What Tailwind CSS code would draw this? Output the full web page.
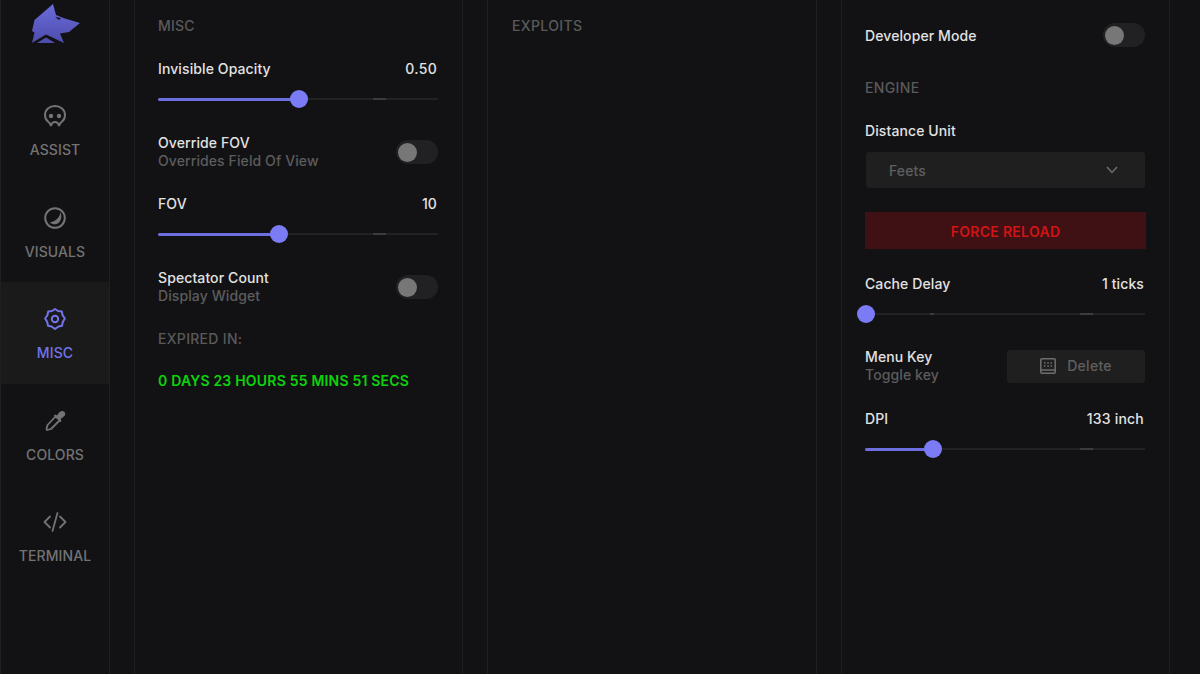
<!DOCTYPE html>
<html lang="en">
<head>
  <meta charset="UTF-8">
  <title>Menu</title>
  <script src="https://cdn.jsdelivr.net/npm/@tailwindcss/browser@4"></script>
</head>
<body class="bg-[#121215] font-['Inter',sans-serif] overflow-hidden">
  <div class="flex h-[674px] w-[1200px] overflow-hidden text-[14px] leading-[18px] font-medium tracking-[0.1px]">

    <!-- Sidebar -->
    <aside class="w-[110px] shrink-0 border-x border-[#1c211d] text-[#737373]">
      <div class="h-[79px] flex justify-center">
        <svg class="w-[50px] h-[40px] mt-[4px] ml-[1px]" viewBox="30 4 50 40">
          <defs>
            <linearGradient id="wolf" x1="0" y1="0" x2="0" y2="1">
              <stop offset="0" stop-color="#6c6cdc"/>
              <stop offset="1" stop-color="#4c4cac"/>
            </linearGradient>
          </defs>
          <path fill="url(#wolf)" d="M52 4 L55 15 L63 18.300 L79 23 L68 32 L59 33.500 L63 43 L31 43 L33.500 32.500 L31 31 L33.500 20 Z"/>
          <path fill="#121215" d="M54 17 L60 18 L58 20 Z"/>
          <path fill="#121215" d="M30 43.500 L45 34.500 L64 43.500 L55 43.500 L45 37.500 L35 43.500 Z"/>
        </svg>
      </div>

      <a class="h-[101.5px] flex flex-col items-center">
        <svg class="mt-[25px] w-[24px] h-[24px]" viewBox="0 0 24 24" fill="none" stroke="#737373" stroke-width="2">
          <path d="M8 22 C7.500 20 7 19 5 17.500 C3 16 2 14 2 11 C2 5.500 6.500 2 12 2 C17.500 2 22 5.500 22 11 C22 14 21 16 19 17.500 C17 19 16.500 20 16 22 C15.500 19.500 14.500 18 12 18 C9.500 18 8.500 19.500 8 22 Z"/>
          <circle cx="8" cy="12" r="2.200" fill="#737373" stroke="none"/>
          <circle cx="16" cy="12" r="2.200" fill="#737373" stroke="none"/>
        </svg>
        <span class="mt-[13px]">ASSIST</span>
      </a>

      <a class="h-[101.5px] flex flex-col items-center">
        <svg class="mt-[25px] w-[24px] h-[24px]" viewBox="0 0 24 24" fill="none" stroke="#737373" stroke-width="2">
          <circle cx="12" cy="12" r="9.800"/>
          <path fill="#737373" stroke="none" d="M17.500 6 C17 11 13.500 15 7 16.500 C9 18.500 13 19 15.500 17 C18.500 14.500 19 10 17.500 6 Z"/>
        </svg>
        <span class="mt-[13px]">VISUALS</span>
      </a>

      <a class="h-[101.5px] flex flex-col items-center bg-[#1a1a1b] text-[#7374ea]">
        <svg class="mt-[25px] w-[24px] h-[24px]" viewBox="0 0 24 24" fill="none" stroke="#7374ea" stroke-width="2" stroke-linejoin="round">
          <path d="M12 2 L15 4 L18.800 4.500 L19.500 8 L21.800 11.500 L19.800 15 L19 18.800 L15.500 19.500 L12 22 L8.500 19.500 L5 18.800 L4.200 15 L2.200 11.500 L4.500 8 L5.200 4.500 L9 4 Z"/>
          <circle cx="12" cy="12" r="3.200"/>
        </svg>
        <span class="mt-[13px]">MISC</span>
      </a>

      <a class="h-[101.5px] flex flex-col items-center">
        <svg class="mt-[25px] w-[24px] h-[24px]" viewBox="0 0 24 24" fill="none" stroke="#737373" stroke-width="1.800" stroke-linejoin="round">
          <path d="M13 7 L17 11 L8 20 L4 21 L3.500 20 L4.500 16 Z"/>
          <path fill="#737373" d="M12 6.500 L14 8 L17 3.800 C18 2.500 20 2.500 20.800 3.500 C21.500 4.500 21.300 6 20 7 L16 10 L17.500 12 Z"/>
        </svg>
        <span class="mt-[13px]">COLORS</span>
      </a>

      <a class="h-[101.5px] flex flex-col items-center">
        <svg class="mt-[25px] w-[24px] h-[24px]" viewBox="0 0 24 24" fill="none" stroke="#737373" stroke-width="1.800" stroke-linecap="round" stroke-linejoin="round">
          <path d="M7 6.500 L1.500 12 L7 17.500"/>
          <path d="M17 6.500 L22.500 12 L17 17.500"/>
          <path d="M14.500 3 L9.500 21"/>
        </svg>
        <span class="mt-[13px]">TERMINAL</span>
      </a>
    </aside>

    <!-- Misc column -->
    <section class="ml-[24px] w-[329px] shrink-0 border-x border-[#1c211d] pl-[23px] pr-[24px] pt-[17px] text-[#e2e2e2]">
      <div class="text-[#5a5a5a] tracking-[0.2px]">MISC</div>

      <div class="mt-[25px] flex justify-between"><span>Invisible Opacity</span><span class="mr-px tracking-[0.3px]">0.50</span></div>
      <div class="mt-[11px] relative h-[20px] flex items-center">
        <div class="h-[2px] w-full bg-[#202322]"></div>
        <div class="absolute left-[215px] w-[13px] h-[2px] bg-[#3a3d3b]"></div>
        <div class="absolute left-0 h-[3px] w-[140px] bg-[#6d6fe0] rounded-full"></div>
        <div class="absolute left-[132px] w-[18px] h-[18px] rounded-full bg-[#7b7cf5]"></div>
      </div>

      <div class="mt-[25px] flex justify-between items-center">
        <div>
          <div>Override FOV</div>
          <div class="text-[#5c5c5c]">Overrides Field Of View</div>
        </div>
        <div class="w-[42px] h-[24px] rounded-full bg-[#212123] flex items-center pl-[2px]">
          <div class="w-[19px] h-[19px] rounded-full bg-[#777777]"></div>
        </div>
      </div>

      <div class="mt-[25px] flex justify-between"><span>FOV</span><span class="mr-px">10</span></div>
      <div class="mt-[11px] relative h-[20px] flex items-center">
        <div class="h-[2px] w-full bg-[#202322]"></div>
        <div class="absolute left-[215px] w-[13px] h-[2px] bg-[#3a3d3b]"></div>
        <div class="absolute left-0 h-[3px] w-[120px] bg-[#6d6fe0] rounded-full"></div>
        <div class="absolute left-[112px] w-[18px] h-[18px] rounded-full bg-[#7b7cf5]"></div>
      </div>

      <div class="mt-[25px] flex justify-between items-center">
        <div>
          <div>Spectator Count</div>
          <div class="text-[#5c5c5c]">Display Widget</div>
        </div>
        <div class="w-[42px] h-[24px] rounded-full bg-[#212123] flex items-center pl-[2px]">
          <div class="w-[19px] h-[19px] rounded-full bg-[#777777]"></div>
        </div>
      </div>

      <div class="mt-[25px] text-[#5a5a5a] tracking-[0.3px]">EXPIRED IN:</div>
      <div class="mt-[24px] text-[#0bd40b] font-semibold tracking-[0.2px]">0 DAYS 23 HOURS 55 MINS 51 SECS</div>
    </section>

    <!-- Exploits column -->
    <section class="ml-[24px] w-[330px] shrink-0 border-x border-[#1c211d] pl-[24px] pt-[17px] text-[#5a5a5a] tracking-[0.35px]">
      <div>EXPLOITS</div>
    </section>

    <!-- Settings column -->
    <section class="ml-[24px] w-[329px] shrink-0 border-x border-[#1c211d] pl-[23px] pr-[24px] pt-[26px] text-[#e2e2e2]">
      <div class="h-[18px] flex justify-between items-center">
        <span class="pt-px">Developer Mode</span>
        <div class="w-[42px] h-[24px] rounded-full bg-[#212123] flex items-center pl-[2px]">
          <div class="w-[19px] h-[19px] rounded-full bg-[#777777]"></div>
        </div>
      </div>

      <div class="mt-[35px] text-[#5a5a5a] tracking-[0.35px]">ENGINE</div>
      <div class="mt-[24px] pt-px h-[18px]">Distance Unit</div>

      <div class="mt-[13px] ml-px h-[36px] rounded-[3px] bg-[#1f1f20] flex items-center justify-between pl-[23px] pr-[27px] text-[#5f5f5f]">
        <span class="pt-px">Feets</span>
        <svg class="w-[12px] h-[8px]" viewBox="0 0 12 8" fill="none" stroke="#6e6e6e" stroke-width="1.500"><path d="M1 1 L6 6.500 L11 1"/></svg>
      </div>

      <div class="mt-[24px] -mr-px h-[37px] pt-[2px] bg-[#3f1014] flex items-center justify-center text-[#d11414] font-semibold tracking-[0.3px]">FORCE RELOAD</div>

      <div class="mt-[26px] flex justify-between"><span>Cache Delay</span><span class="mr-px">1 ticks</span></div>
      <div class="mt-[11px] relative h-[20px] flex items-center">
        <div class="h-[2px] w-full bg-[#202322]"></div>
        <div class="absolute left-[65px] w-[4px] h-[2px] bg-[#3a3d3b]"></div>
        <div class="absolute left-[215px] w-[13px] h-[2px] bg-[#3a3d3b]"></div>
        <div class="absolute left-[-8px] w-[18px] h-[18px] rounded-full bg-[#7b7cf5]"></div>
      </div>

      <div class="mt-[24px] flex justify-between items-center">
        <div>
          <div>Menu Key</div>
          <div class="text-[#5c5c5c]">Toggle key</div>
        </div>
        <div class="w-[138px] h-[33px] rounded-[3px] bg-[#1f1f20] flex items-center justify-center gap-[11px] text-[#5f5f5f] tracking-[0.3px]">
          <svg class="w-[16px] h-[16px]" viewBox="0 0 16 16" fill="none" stroke="#6e6e6e" stroke-width="1.500">
            <rect x="0.800" y="0.800" width="14.400" height="14.400" rx="1"/>
            <path stroke-width="1.600" d="M4 5 h1.500 M7.300 5 h1.500 M10.500 5 h1.500 M4 8 h1.500 M7.300 8 h1.500 M10.500 8 h1.500 M1 12 h14"/>
          </svg>
          <span>Delete</span>
        </div>
      </div>

      <div class="mt-[26px] flex justify-between"><span>DPI</span><span class="mr-px tracking-[0.2px]">133 inch</span></div>
      <div class="mt-[11px] relative h-[20px] flex items-center">
        <div class="h-[2px] w-full bg-[#202322]"></div>
        <div class="absolute left-[215px] w-[13px] h-[2px] bg-[#3a3d3b]"></div>
        <div class="absolute left-0 h-[3px] w-[66px] bg-[#6d6fe0] rounded-full"></div>
        <div class="absolute left-[59px] w-[18px] h-[18px] rounded-full bg-[#7b7cf5]"></div>
      </div>
    </section>
  </div>
</body>
</html>
